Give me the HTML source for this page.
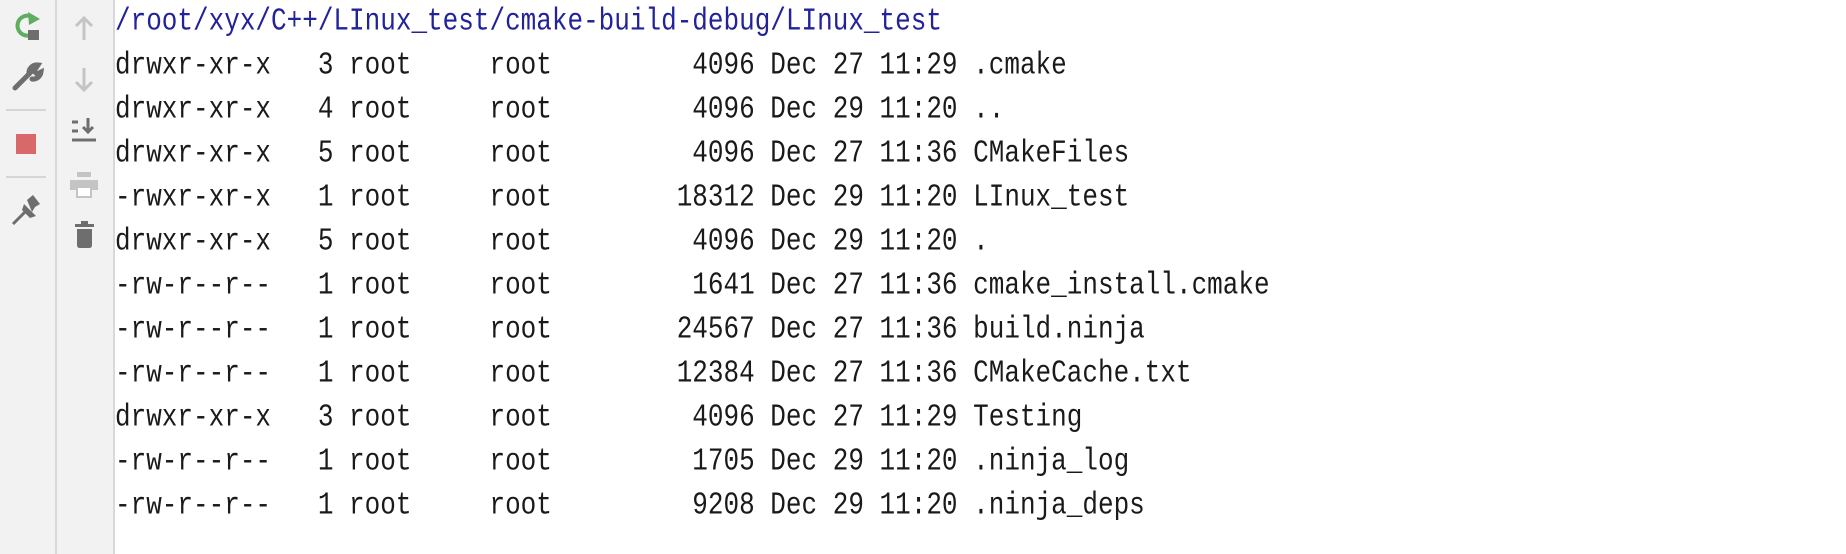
<!DOCTYPE html>
<html><head><meta charset="utf-8"><style>
html,body{margin:0;padding:0;width:1846px;height:554px;overflow:hidden;background:#fff}
.c1{position:absolute;left:0;top:0;width:55px;height:554px;background:#f2f2f2;border-right:2px solid #d9d9d9}
.c2{position:absolute;left:57px;top:0;width:56px;height:554px;background:#f2f2f2;border-right:2px solid #d9d9d9}
svg{position:absolute}
.txt{position:absolute;left:115px;top:-1px;font-family:"Liberation Mono",monospace;font-size:26px;color:#1a1a1a}
.txt div{height:44px;line-height:44px;white-space:pre}
.txt span{display:inline-block;transform:scaleY(1.2)}
.p{color:#22229a}
</style></head><body>
<div class="c1"></div><div class="c2"></div>
<svg style="left:0;top:0" width="115" height="260" viewBox="0 0 115 260">
 <path d="M31 35 A10 10 0 1 1 35 19" fill="none" stroke="#5fad5f" stroke-width="4"/>
 <path d="M28 12 L40 19 L29 25 Z" fill="#5fad5f"/>
 <rect x="28" y="30" width="11" height="10" fill="#6e6e6e"/>
 <path d="M15 88 L31 72 M29 74 A8 8 0 0 1 38 65 L34 71 L37 74 L41 72 A8 8 0 0 1 32 79" fill="none" stroke="#6e6e6e" stroke-width="5" stroke-linecap="round"/>
 <rect x="6" y="109" width="40" height="2" fill="#d6d6d6"/>
 <rect x="16" y="134" width="20" height="20" fill="#d9686a"/>
 <rect x="6" y="176" width="40" height="2" fill="#d6d6d6"/>
 <path d="M27 200 L33 195 L40 204 L35 207 L32 212 Z" fill="#6e6e6e"/>
 <path d="M24 204 L36 216 L30 218 L22 210 Z" fill="#6e6e6e"/>
 <path d="M13 224 L27 210" stroke="#6e6e6e" stroke-width="3"/>
 <path d="M84 40 V18 M76 26 L84 18 L92 26" fill="none" stroke="#c4c4c4" stroke-width="3"/>
 <path d="M84 68 V90 M76 82 L84 90 L92 82" fill="none" stroke="#c4c4c4" stroke-width="3"/>
 <path d="M72 122 h6 M72 131 h6 M72 140 h24 M88 118 v14 M83 127 l5 5 l5 -5" fill="none" stroke="#6e6e6e" stroke-width="3"/>
 <rect x="77" y="172" width="14" height="5" fill="#c4c4c4"/>
 <rect x="70" y="180" width="28" height="10" fill="#c4c4c4"/>
 <rect x="77" y="187" width="14" height="10" fill="#fff" stroke="#c4c4c4" stroke-width="2"/>
 <rect x="75" y="224" width="19" height="3" fill="#6e6e6e"/>
 <rect x="81" y="221" width="7" height="3" fill="#6e6e6e"/>
 <path d="M77 229 H92 V245 Q92 248 89 248 H80 Q77 248 77 245 Z" fill="#6e6e6e"/>
</svg>
<div class="txt"><div class="p"><span>/root/xyx/C++/LInux_test/cmake-build-debug/LInux_test</span></div><div><span>drwxr-xr-x   3 root     root         4096 Dec 27 11:29 .cmake</span></div><div><span>drwxr-xr-x   4 root     root         4096 Dec 29 11:20 ..</span></div><div><span>drwxr-xr-x   5 root     root         4096 Dec 27 11:36 CMakeFiles</span></div><div><span>-rwxr-xr-x   1 root     root        18312 Dec 29 11:20 LInux_test</span></div><div><span>drwxr-xr-x   5 root     root         4096 Dec 29 11:20 .</span></div><div><span>-rw-r--r--   1 root     root         1641 Dec 27 11:36 cmake_install.cmake</span></div><div><span>-rw-r--r--   1 root     root        24567 Dec 27 11:36 build.ninja</span></div><div><span>-rw-r--r--   1 root     root        12384 Dec 27 11:36 CMakeCache.txt</span></div><div><span>drwxr-xr-x   3 root     root         4096 Dec 27 11:29 Testing</span></div><div><span>-rw-r--r--   1 root     root         1705 Dec 29 11:20 .ninja_log</span></div><div><span>-rw-r--r--   1 root     root         9208 Dec 29 11:20 .ninja_deps</span></div></div>
</body></html>
